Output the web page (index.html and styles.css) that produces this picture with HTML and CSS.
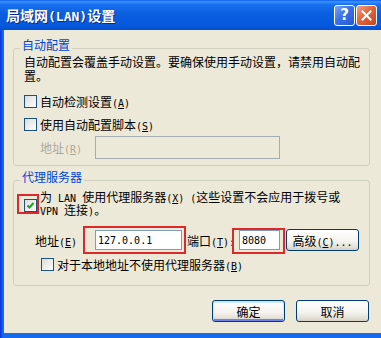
FILE: index.html
```html
<!DOCTYPE html>
<html lang="zh-CN">
<head>
  <meta charset="UTF-8" />
  <title>局域网(LAN)设置</title>
  <link rel="stylesheet" href="styles.css">
</head>
<body>
  <div class="window">
    <div class="titlebar">
      <span class="title">局域网<span class="k">(LAN)</span>设置</span>
      <span class="tbtn help">?</span>
      <span class="tbtn close">
        <svg width="11" height="11" viewBox="0 0 11 11"><path d="M1.5 1.5 L9.5 9.5 M9.5 1.5 L1.5 9.5" stroke="#fff" stroke-width="2" stroke-linecap="square"/></svg>
      </span>
    </div>

    <div class="dialog">
      <div class="group auto">
        <div class="legend">自动配置</div>
        <div class="desc">
          <div>自动配置会覆盖手动设置。要确保使用手动设置，请禁用自动配</div>
          <div>置。</div>
        </div>
        <div class="row">
          <span class="check"></span>
          <span class="label">自动检测设置<span class="k">(<u>A</u>)</span></span>
        </div>
        <div class="row">
          <span class="check"></span>
          <span class="label">使用自动配置脚本<span class="k">(<u>S</u>)</span></span>
        </div>
        <div class="row indent">
          <span class="field-label disabled">地址<span class="k">(<u>R</u>)</span></span>
          <span class="field script-field"></span>
        </div>
      </div>

      <div class="group proxy">
        <div class="legend">代理服务器</div>
        <div class="row multi">
          <span class="check checked marked">
            <svg width="11" height="11" viewBox="0 0 11 11"><path d="M2.5 5.5 L4.5 7.5 L8.5 3" fill="none" stroke="#21a121" stroke-width="2"/></svg>
          </span>
          <span class="label">
            <span class="line">为<span class="k"> LAN </span>使用代理服务器<span class="k">(<u>X</u>) (</span>这些设置不会应用于拨号或</span>
            <span class="line"><span class="k">VPN </span>连接<span class="k">)</span>。</span>
          </span>
        </div>
        <div class="row addr-row">
          <span class="field-label addr-label">地址<span class="k">(<u>E</u>)</span></span>
          <span class="field addr marked"><span class="k">127.0.0.1</span></span>
          <span class="port-label">端口<span class="k">(<u>T</u>):</span></span>
          <span class="field port marked"><span class="k">8080</span></span>
          <button class="btn adv">高级<span class="k">(<u>C</u>)...</span></button>
        </div>
        <div class="row bypass">
          <span class="check"></span>
          <span class="label">对于本地地址不使用代理服务器<span class="k">(<u>B</u>)</span></span>
        </div>
      </div>

      <div class="actions">
        <button class="btn default">确定</button>
        <button class="btn">取消</button>
      </div>
    </div>
  </div>
</body>
</html>
```

FILE: styles.css
```css
* {
  box-sizing: border-box;
}
body {
  margin: 0;
  font-family: "Noto Sans CJK SC", "Liberation Sans", sans-serif;
  font-size: 12px;
  color: #000;
}
.k {
  font-family: "DejaVu Sans Mono", "Liberation Mono", monospace;
  font-size: 10px;
}
.window {
  width: 381px;
  height: 338px;
  display: flex;
  flex-direction: column;
  background: linear-gradient(90deg, #0831d9, #166aee 3px);
}

/* title bar */
.titlebar {
  height: 30px;
  display: flex;
  align-items: center;
  padding: 0 4px 0 6px;
  background: linear-gradient(#0a5ce8 0%, #3d95ff 6%, #1a72f0 14%, #0a5fe0 45%, #0658dc 85%, #0450cf 100%);
}
.title {
  flex: 1;
  color: #fff;
  font-weight: bold;
  font-size: 14px;
  text-shadow: 1px 1px 0 #0b2a8a;
}
.title .k {
  font-size: 13px;
  font-weight: bold;
}
.tbtn {
  width: 21px;
  height: 21px;
  margin-left: 1px;
  border: 1px solid #fff;
  border-radius: 3px;
  display: flex;
  align-items: center;
  justify-content: center;
  color: #fff;
  font-family: "DejaVu Sans", sans-serif;
  font-weight: bold;
  font-size: 15px;
}
.help {
  background: linear-gradient(135deg, #7aa8f8, #3a71e6 45%, #2458d6);
}
.close {
  background: linear-gradient(135deg, #f3a284, #e3633a 45%, #c9451e);
}

/* dialog body */
.dialog {
  flex: 1;
  margin: 0 0 5px 4px;
  background: #ece9d8;
  padding: 18px 11px 0 9px;
}
.group {
  border: 1px solid #d0d0bf;
  border-radius: 3px;
  padding: 0 0 6px 10px;
}
.legend {
  width: fit-content;
  margin: -11px 0 4px -4px;
  padding: 0 2px;
  line-height: 14px;
  background: #ece9d8;
  color: #0046d5;
}
.proxy {
  margin-top: 14px;
  padding-bottom: 9px;
}
.proxy .legend {
  margin-bottom: 0;
}
/* tight two-line texts: a compact primary font keeps the line boxes apart */
.desc,
.line {
  font-family: "DejaVu Sans", "Noto Sans CJK SC", sans-serif;
}
.desc {
  line-height: 14px;
  margin-bottom: 6px;
}
.row {
  display: flex;
  align-items: center;
  height: 23px;
}
.check {
  position: relative;
  flex: none;
  width: 13px;
  height: 13px;
  border: 1px solid #1c5180;
  background: linear-gradient(135deg, #dcdcd7, #fff);
  display: flex;
  align-items: center;
  justify-content: center;
}
.label {
  margin-left: 3px;
}
.indent {
  padding-left: 16px;
}
.field-label {
  width: 55px;
}
.disabled {
  color: #aca899;
}
.field {
  position: relative;
  display: flex;
  align-items: center;
  height: 20px;
  border: 1px solid #7f9db9;
  background: #fff;
  padding: 0 2px;
}
.script-field {
  width: 185px;
  height: 23px;
  border-color: #a5acb2;
  background: #ece9d8;
}

/* proxy group */
.multi {
  height: auto;
  margin-top: 8px;
}
.line {
  display: block;
  line-height: 13px;
}
.addr-row {
  height: 24px;
  margin-top: 10px;
  padding-left: 11px;
}
.addr-label {
  width: 60px;
}
.addr {
  width: 87px;
}
.port-label {
  width: 52px;
  margin-left: 5px;
}
.port {
  width: 41px;
}
.adv {
  width: 71px;
  height: 21px;
  margin-left: 6px;
}
.bypass {
  margin-top: 1px;
  padding-left: 17px;
}

/* red highlight boxes */
.marked::after {
  content: "";
  position: absolute;
  border: 2px solid #dc2a2a;
}
.check.marked::after {
  left: -8px;
  right: -3px;
  top: -6px;
  bottom: -3px;
}
.addr.marked::after {
  left: -13px;
  right: -5px;
  top: -5px;
  bottom: -5px;
}
.port.marked::after {
  left: -8px;
  right: -6px;
  top: -3px;
  bottom: -5px;
}

/* buttons */
.btn {
  font: inherit;
  color: #000;
  width: 73px;
  height: 22px;
  padding: 0;
  border: 1px solid #003c74;
  border-radius: 3px;
  background: linear-gradient(#fff, #f5f4ef 55%, #e3e0d5 85%, #d6d0c5);
}
.btn.default {
  box-shadow: inset 0 1px 0 1px #cee7ff, inset 0 -1px 0 1px #6982ee;
}
.actions {
  display: flex;
  justify-content: flex-end;
  gap: 11px;
  margin-top: 14px;
  padding-right: 1px;
}
```
